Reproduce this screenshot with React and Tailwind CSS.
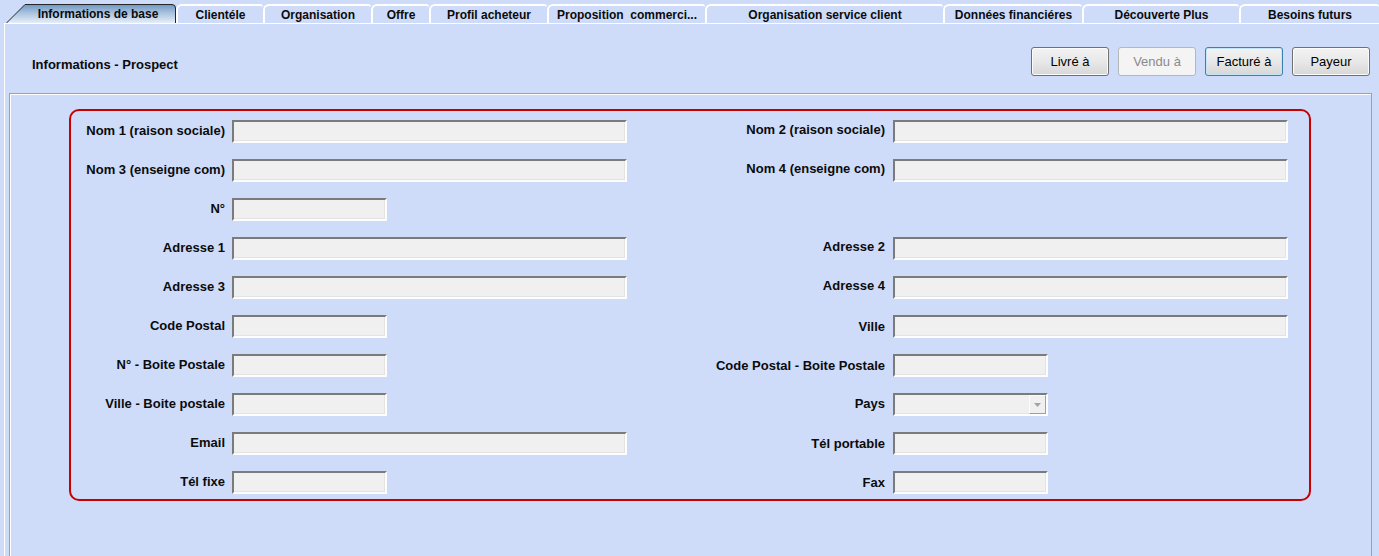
import React from "react";

const tabs = [
  { label: "Clientéle", w: "w-[87px]" },
  { label: "Organisation", w: "w-[108px]" },
  { label: "Offre", w: "w-[58px]" },
  { label: "Profil acheteur", w: "w-[118px]" },
  { label: "Proposition  commerci...", w: "w-[158px]" },
  { label: "Organisation service client", w: "w-[238px]" },
  { label: "Données financiéres", w: "w-[139px]" },
  { label: "Découverte Plus", w: "w-[157px]" },
  { label: "Besoins futurs", w: "w-[140px]" },
];

const rows = [
  { l: "Nom 1 (raison sociale)", lw: "wide", r: "Nom 2 (raison sociale)", rw: "wide", rc: "-translate-y-[2px]" },
  { l: "Nom 3 (enseigne com)", lw: "wide", r: "Nom 4 (enseigne com)", rw: "wide", rc: "-translate-y-[2px]" },
  { l: "N°", lw: "narrow", r: null, rw: null },
  { l: "Adresse 1", lw: "wide", r: "Adresse 2", rw: "wide", rc: "-translate-y-[2px]" },
  { l: "Adresse 3", lw: "wide", r: "Adresse 4", rw: "wide", rc: "-translate-y-[2px]" },
  { l: "Code Postal", lw: "narrow", r: "Ville", rw: "wide", rc: "" },
  { l: "N° - Boite Postale", lw: "narrow", r: "Code Postal - Boite Postale", rw: "narrow", rc: "" },
  { l: "Ville - Boite postale", lw: "narrow", r: "Pays", rw: "select", rc: "-translate-y-[1px]" },
  { l: "Email", lw: "wide", r: "Tél portable", rw: "narrow", rc: "" },
  { l: "Tél fixe", lw: "narrow", r: "Fax", rw: "narrow", rc: "" },
];

const fieldBase =
  "h-[23px] border-2 border-t-[#7b7b7b] border-l-[#7b7b7b] border-b-[#fdfdfd] border-r-[#fdfdfd] bg-[#f0f0f0] shadow-[inset_-1px_-1px_0_#e3e3e3]";

function Field({ kind }) {
  if (!kind) return <div />;
  if (kind === "select") {
    return (
      <div className={`${fieldBase} w-[155px] flex justify-end items-stretch`}>
        <div className="w-[17px] border border-t-[#fbfbfb] border-l-[#fbfbfb] border-b-[#a0a0a0] border-r-[#a0a0a0] bg-[#f0f0f0] flex items-center justify-center">
          <svg width="7" height="4" viewBox="0 0 7 4">
            <path d="M0 0 L7 0 L3.5 4 Z" fill="#a3a3a3" />
          </svg>
        </div>
      </div>
    );
  }
  return <div className={`${fieldBase} ${kind === "wide" ? "w-[395px]" : "w-[155px]"}`} />;
}

function Btn({ children, variant }) {
  let cls =
    "w-[78px] h-[29px] rounded-[3px] border flex items-center justify-center text-[13px] ";
  if (variant === "disabled") {
    cls += "border-[#b4b8bb] bg-[#f4f4f4] text-[#8a8a8a]";
  } else if (variant === "focus") {
    cls +=
      "border-[#3c7fb1] bg-[linear-gradient(#f3f3f3,#e8e8e8_50%,#d7d7d7)] shadow-[inset_0_0_0_1px_#c4e5f6] text-black";
  } else {
    cls +=
      "border-[#707070] bg-[linear-gradient(#f3f3f3,#e8e8e8_50%,#d7d7d7)] shadow-[inset_0_0_0_1px_#fbfbfb] text-black";
  }
  return <div className={cls}>{children}</div>;
}

export default function App() {
  return (
    <div className="w-[1379px] h-[556px] bg-[#cedcfa] overflow-hidden flex flex-col font-['Liberation_Sans',Arial,sans-serif] text-[#0b0b0b]">
      {/* Tab strip */}
      <div className="flex h-[23px] pl-[6px] items-end shrink-0">
        <div className="relative w-[170px] h-[19px] flex items-center justify-center pl-[14px] text-[12px] font-bold">
          <svg
            className="absolute inset-0"
            width="170"
            height="19"
            viewBox="0 0 170 19"
          >
            <defs>
              <linearGradient id="actTab" x1="0" y1="0" x2="0" y2="1">
                <stop offset="0" stopColor="#6f97c3" />
                <stop offset="0.45" stopColor="#a9c2de" />
                <stop offset="1" stopColor="#e6eef8" />
              </linearGradient>
            </defs>
            <path
              d="M0.5 19 L19 0.5 L166 0.5 Q169.5 0.5 169.5 4 L169.5 19"
              fill="url(#actTab)"
              stroke="#262626"
              strokeWidth="1"
            />
          </svg>
          <span className="relative">Informations de base</span>
        </div>
        {tabs.map((t) => (
          <div
            key={t.label}
            className={`${t.w} h-[19px] border-t-2 border-l-2 border-white rounded-tl-[6px] rounded-tr-[3px] flex items-center justify-center text-[12px] font-bold whitespace-pre`}
          >
            {t.label}
          </div>
        ))}
      </div>

      {/* Outer panel */}
      <div className="flex-1 ml-[4px] border-l border-t border-white flex flex-col">
        {/* Header */}
        <div className="h-[69px] shrink-0 flex items-start justify-between pl-[27px] pr-[9px]">
          <div className="mt-[33px] text-[13px] leading-[15px] font-bold">
            Informations - Prospect
          </div>
          <div className="mt-[23px] flex gap-[9px]">
            <Btn>Livré à</Btn>
            <Btn variant="disabled">Vendu à</Btn>
            <Btn variant="focus">Facturé à</Btn>
            <Btn>Payeur</Btn>
          </div>
        </div>

        {/* Inner panel */}
        <div className="flex-1 ml-[4px] mr-[7px] border-t border-l border-r border-[#a0a0a0] shadow-[inset_1px_1px_0_#ffffff]">
          <div className="ml-[59px] mt-[15px] w-[1242px] border-2 border-[#c80000] rounded-[10px] pt-[9px] pb-[5px]">
            <div className="grid grid-cols-[161px_395px_266px_395px] gap-y-[16px]">
              {rows.map((r, i) => (
                <React.Fragment key={i}>
                  <div className="pr-[7px] flex items-center justify-end text-[13px] font-bold whitespace-nowrap">
                    <span className="-translate-y-[1px]">{r.l}</span>
                  </div>
                  <div className="flex items-center">
                    <Field kind={r.lw} />
                  </div>
                  <div className="pr-[8px] flex items-center justify-end text-[13px] font-bold whitespace-nowrap">
                    {r.r ? <span className={r.rc}>{r.r}</span> : null}
                  </div>
                  <div className="flex items-center">
                    <Field kind={r.rw} />
                  </div>
                </React.Fragment>
              ))}
            </div>
          </div>
        </div>
      </div>
    </div>
  );
}
